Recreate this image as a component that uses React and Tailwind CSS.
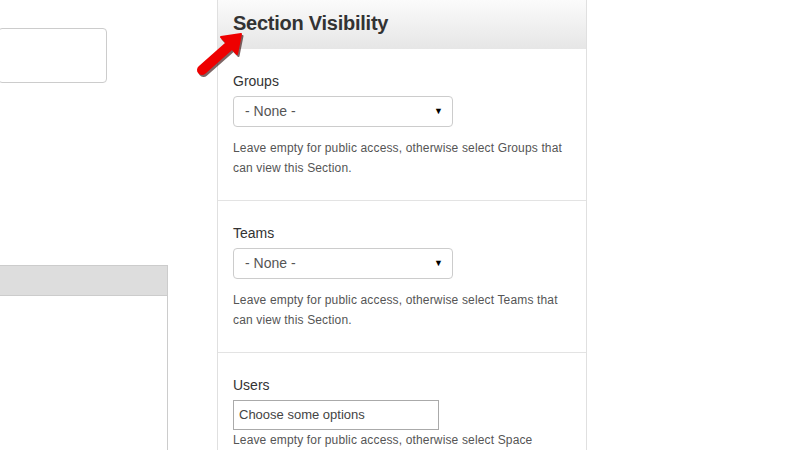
import React from "react";

const font = { fontFamily: '"Liberation Sans", Arial, sans-serif' };

function SelectBox() {
  return (
    <div className="flex h-[31px] w-[220px] items-center justify-between rounded-[4px] border border-[#cccccc] bg-white pl-[11px] pr-[9px]">
      <span className="text-[14px] text-[#555555]">- None -</span>
      <span className="text-[9px] leading-none text-black">▼</span>
    </div>
  );
}

function Section({ label, children, help, last }) {
  return (
    <div className={`px-[15px] pt-[22px] ${last ? "" : "border-b border-[#e3e3e3] pb-[22px]"}`}>
      <div className="text-[14px] leading-[20px] text-[#333333]">{label}</div>
      <div className="mt-[5px]">{children}</div>
      <p className={`${last ? "mt-0" : "mt-[11px]"} text-[12px] leading-[20px] tracking-[0.15px] text-[#555555]`}>{help}</p>
    </div>
  );
}

export default function App() {
  return (
    <div className="relative h-[450px] w-[800px] overflow-hidden bg-white" style={font}>
      <div className="flex h-full">
        {/* left column: text field and a panel with a grey header */}
        <div className="flex w-[168px] flex-col pt-[28px]">
          <div className="-ml-[2px] h-[55px] w-[109px] rounded-[4px] border border-[#cccccc] bg-white" />
          <div className="mt-[182px] flex flex-1 flex-col -ml-[2px]">
            <div className="h-[31px] border border-[#cccccc] bg-[#dddddd]" />
            <div className="flex-1 border-r border-[#cccccc] bg-white" />
          </div>
        </div>

        {/* visibility panel */}
        <div className="ml-[49px] flex h-full w-[370px] flex-col border-x border-[#e0e0e0] bg-white">
          <div className="h-[49px] bg-gradient-to-b from-[#fbfbfb] to-[#e6e6e6] px-[15px] pt-[10px]">
            <h2 className="text-[20px] font-bold leading-[26px] tracking-[-0.25px] text-[#333333]">Section Visibility</h2>
          </div>
          <Section
            label="Groups"
            help={<>Leave empty for public access, otherwise select Groups that<br />can view this Section.</>}
          >
            <SelectBox />
          </Section>
          <Section
            label="Teams"
            help={<>Leave empty for public access, otherwise select Teams that<br />can view this Section.</>}
          >
            <SelectBox />
          </Section>
          <Section
            last
            label="Users"
            help={<>Leave empty for public access, otherwise select Space</>}
          >
            <div className="flex h-[30px] w-[206px] items-center border border-[#aaaaaa] bg-white pl-[5px]">
              <span className="text-[13px] text-[#444444]">Choose some options</span>
            </div>
          </Section>
        </div>
      </div>

      {/* red pointer arrow */}
      <svg className="absolute left-0 top-0" width="800" height="450" viewBox="0 0 800 450">
        <g transform="translate(1.5 2)" fill="#2a0000" stroke="#2a0000" opacity="0.6">
          <line x1="202" y1="70" x2="228" y2="47" strokeWidth="10" strokeLinecap="round" />
          <polygon points="241,34 237,54 221,37" strokeWidth="2" strokeLinejoin="round" />
        </g>
        <g fill="#ee0000" stroke="#ee0000">
          <line x1="202" y1="70" x2="228" y2="47" strokeWidth="10" strokeLinecap="round" />
          <polygon points="241,34 237,54 221,37" strokeWidth="2" strokeLinejoin="round" />
        </g>
      </svg>
    </div>
  );
}
